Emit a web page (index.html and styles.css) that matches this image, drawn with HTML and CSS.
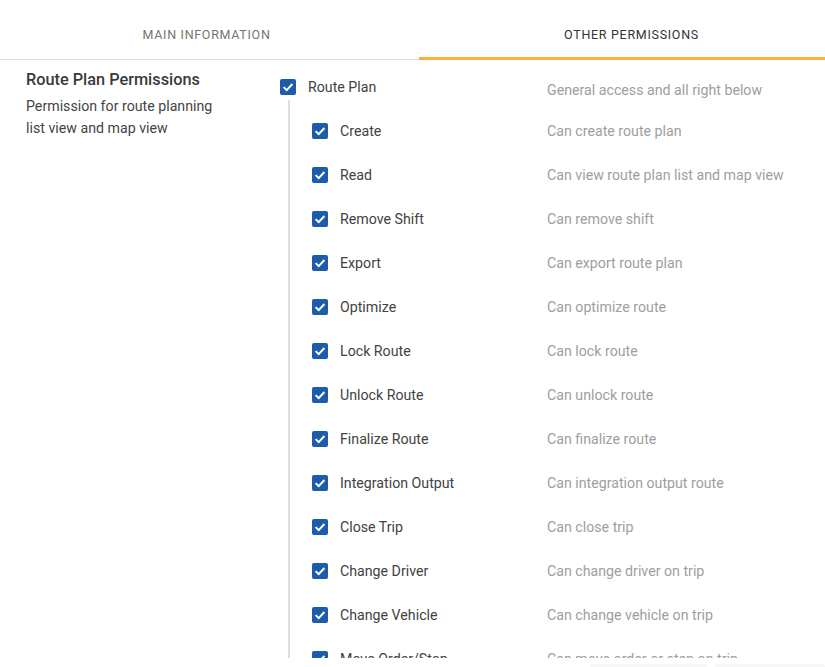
FILE: index.html
```html
<!DOCTYPE html>
<html>
<head>
<meta charset="utf-8">
<link rel="stylesheet" href="styles.css">
</head>
<body>
<div class="page">
  <div class="tabs">
    <div class="tab tab-main">MAIN INFORMATION</div>
    <div class="tab tab-other active">OTHER PERMISSIONS</div>
  </div>
  <div class="content">
    <div class="intro">
      <div class="title">Route Plan Permissions</div>
      <div class="desc">Permission for route planning list view and map view</div>
    </div>
    <div class="tree">
      <div class="row parent">
        <span class="cb"><svg viewBox="0 0 16 16"><path d="M3.6 8.1 6.7 11.1 12.4 5"/></svg></span>
        <span class="label">Route Plan</span>
        <span class="note">General access and all right below</span>
      </div>
      <div class="children">
        <div class="row"><span class="cb"><svg viewBox="0 0 16 16"><path d="M3.6 8.1 6.7 11.1 12.4 5"/></svg></span><span class="label">Create</span><span class="note">Can create route plan</span></div>
        <div class="row"><span class="cb"><svg viewBox="0 0 16 16"><path d="M3.6 8.1 6.7 11.1 12.4 5"/></svg></span><span class="label">Read</span><span class="note">Can view route plan list and map view</span></div>
        <div class="row"><span class="cb"><svg viewBox="0 0 16 16"><path d="M3.6 8.1 6.7 11.1 12.4 5"/></svg></span><span class="label">Remove Shift</span><span class="note">Can remove shift</span></div>
        <div class="row"><span class="cb"><svg viewBox="0 0 16 16"><path d="M3.6 8.1 6.7 11.1 12.4 5"/></svg></span><span class="label">Export</span><span class="note">Can export route plan</span></div>
        <div class="row"><span class="cb"><svg viewBox="0 0 16 16"><path d="M3.6 8.1 6.7 11.1 12.4 5"/></svg></span><span class="label">Optimize</span><span class="note">Can optimize route</span></div>
        <div class="row"><span class="cb"><svg viewBox="0 0 16 16"><path d="M3.6 8.1 6.7 11.1 12.4 5"/></svg></span><span class="label">Lock Route</span><span class="note">Can lock route</span></div>
        <div class="row"><span class="cb"><svg viewBox="0 0 16 16"><path d="M3.6 8.1 6.7 11.1 12.4 5"/></svg></span><span class="label">Unlock Route</span><span class="note">Can unlock route</span></div>
        <div class="row"><span class="cb"><svg viewBox="0 0 16 16"><path d="M3.6 8.1 6.7 11.1 12.4 5"/></svg></span><span class="label">Finalize Route</span><span class="note">Can finalize route</span></div>
        <div class="row"><span class="cb"><svg viewBox="0 0 16 16"><path d="M3.6 8.1 6.7 11.1 12.4 5"/></svg></span><span class="label">Integration Output</span><span class="note">Can integration output route</span></div>
        <div class="row"><span class="cb"><svg viewBox="0 0 16 16"><path d="M3.6 8.1 6.7 11.1 12.4 5"/></svg></span><span class="label">Close Trip</span><span class="note">Can close trip</span></div>
        <div class="row"><span class="cb"><svg viewBox="0 0 16 16"><path d="M3.6 8.1 6.7 11.1 12.4 5"/></svg></span><span class="label">Change Driver</span><span class="note">Can change driver on trip</span></div>
        <div class="row"><span class="cb"><svg viewBox="0 0 16 16"><path d="M3.6 8.1 6.7 11.1 12.4 5"/></svg></span><span class="label">Change Vehicle</span><span class="note">Can change vehicle on trip</span></div>
        <div class="row"><span class="cb"><svg viewBox="0 0 16 16"><path d="M3.6 8.1 6.7 11.1 12.4 5"/></svg></span><span class="label">Move Order/Stop</span><span class="note">Can move order or step on trip</span></div>
        <div class="row"><span class="cb"><svg viewBox="0 0 16 16"><path d="M3.6 8.1 6.7 11.1 12.4 5"/></svg></span><span class="label">Delete Trip</span><span class="note">Can delete trip</span></div>
      </div>
    </div>
  </div>
  <div class="footer">
    <span class="ghost ghost-a"></span>
    <span class="ghost ghost-b"></span>
  </div>
</div>
</body>
</html>
```

FILE: styles.css
```css
html, body {
  margin: 0;
  padding: 0;
  background: #ffffff;
  overflow: hidden;
}
body {
  font-family: Roboto, "Liberation Sans", sans-serif;
  color: #424242;
}
.page {
  width: 825px;
  height: 667px;
  overflow: hidden;
  display: flex;
  flex-direction: column;
}
.tabs {
  display: flex;
  height: 59px;
  border-bottom: 1px solid #e0e0e0;
  flex: none;
}
.tab {
  flex: none;
  display: flex;
  align-items: center;
  justify-content: center;
  font-size: 12.5px;
  letter-spacing: 0.7px;
  color: #757575;
  position: relative;
  padding-top: 10px;
  box-sizing: border-box;
}
.tab-main {
  width: 419px;
  padding-right: 6px;
}
.tab-other {
  width: 425px;
  color: #333333;
}
.tab.active::after {
  content: "";
  position: absolute;
  left: 0;
  right: 0;
  bottom: -1px;
  height: 3px;
  background: #fbb03b;
}
.content {
  height: 598px;
  flex: none;
  overflow: hidden;
  display: flex;
  padding-top: 5px;
  box-sizing: border-box;
}
.intro {
  width: 280px;
  flex: none;
  padding-left: 26px;
  box-sizing: border-box;
  padding-top: 4px;
}
.title {
  font-size: 16.3px;
  font-weight: 500;
  color: #3a3a3a;
  line-height: 22px;
}
.desc {
  font-size: 14.2px;
  line-height: 22px;
  color: #444444;
  margin-top: 4px;
  width: 200px;
}
.tree {
  flex: 1;
}
.row {
  display: flex;
  align-items: center;
  height: 44px;
  font-size: 14.2px;
}
.cb {
  width: 16px;
  height: 16px;
  border-radius: 2px;
  background: #1c5cab;
  flex: none;
  display: flex;
}
.cb svg {
  width: 16px;
  height: 16px;
  fill: none;
  stroke: #ffffff;
  stroke-width: 2;
}
.label {
  color: #424242;
  margin-left: 12px;
  flex: none;
}
.parent .label {
  width: 239px;
}
.children .label {
  width: 207px;
}
.note {
  color: #9e9e9e;
}
.parent .note {
  padding-top: 6px;
}
.children {
  margin-left: 8px;
  margin-top: -9px;
  padding-top: 9px;
  padding-left: 22px;
  border-left: 2px solid #dedede;
}
.footer {
  flex: 1;
  display: flex;
  align-items: flex-end;
  justify-content: flex-end;
  gap: 8px;
}
.ghost {
  height: 3px;
  background: #f7f7f7;
  border-radius: 3px 3px 0 0;
}
.ghost-a {
  width: 117px;
}
.ghost-b {
  width: 110px;
}
```
